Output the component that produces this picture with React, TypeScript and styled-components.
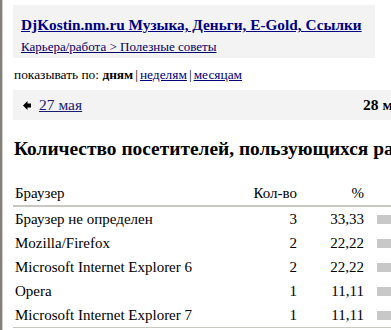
import React from "react";
import styled, { createGlobalStyle } from "styled-components";

const GlobalStyle = createGlobalStyle`
  html, body {
    margin: 0;
    padding: 0;
    background: #fff;
    overflow: hidden;
  }
  body {
    font-family: "Liberation Serif", "Times New Roman", serif;
    color: #000;
  }
`;

const Frame = styled.div`
  width: 820px;
  height: 330px;
  box-sizing: border-box;
  border-left: 2px solid #808080;
  box-shadow: inset 1px 0 0 #d4d0c8;
  padding: 5px 0 0 11px;
`;

const SiteBox = styled.div`
  width: 362px;
  height: 53px;
  box-sizing: border-box;
  background: #f3f3f3;
  padding: 10px 0 0 8px;
`;

const SiteTitle = styled.a`
  display: block;
  font-size: 15.3px;
  font-weight: bold;
  color: #000080;
  text-decoration: underline;
  line-height: 19px;
  white-space: nowrap;
`;

const Crumbs = styled.a`
  display: inline-block;
  margin-top: 5px;
  font-size: 13px;
  color: #000066;
  text-decoration: underline;
  line-height: 15px;
`;

const PeriodLine = styled.div`
  margin-top: 10px;
  padding-left: 1px;
  font-size: 13.4px;
  line-height: 14px;
  white-space: nowrap;
`;

const PeriodLink = styled.a<{ $active?: boolean }>`
  color: ${(p) => (p.$active ? "#000" : "#000080")};
  font-weight: ${(p) => (p.$active ? "bold" : "normal")};
  text-decoration: ${(p) => (p.$active ? "none" : "underline")};
`;

const Sep = styled.span`
  margin: 0 2px;
`;

const DateBar = styled.div`
  margin-top: 8px;
  width: 746px;
  height: 30px;
  background: #f3f3f3;
  display: grid;
  grid-template-columns: 1fr auto 1fr;
  align-items: center;
  padding: 0 10px;
  box-sizing: border-box;
`;

const PrevDay = styled.div`
  display: flex;
  align-items: center;
  gap: 8px;
`;

const DayLink = styled.a`
  font-size: 15.5px;
  color: #1a1a70;
  text-decoration: underline;
`;

const CurrentDay = styled.div`
  font-size: 15.5px;
  font-weight: bold;
`;

const Heading = styled.h2`
  margin: 18px 0 0 1px;
  font-size: 19.4px;
  font-weight: bold;
  line-height: 22px;
  white-space: nowrap;
`;

const Stats = styled.table`
  margin-top: 24px;
  border-collapse: collapse;
  table-layout: fixed;
  width: 520px;
  font-size: 15px;
  border-bottom: 1px solid #c8c8c0;
`;

const HeadCell = styled.th<{ $align?: string }>`
  font-weight: normal;
  text-align: ${(p) => p.$align || "left"};
  padding: 0 2px 3px;
  height: 18px;
  border-bottom: 2px solid #c8c8c0;
  white-space: nowrap;
`;

const Cell = styled.td<{ $align?: string }>`
  text-align: ${(p) => p.$align || "left"};
  padding: 0 2px;
  height: 24px;
  white-space: nowrap;
`;

const BarCell = styled.td`
  padding: 0 0 0 11px;
`;

const Bar = styled.div`
  height: 9px;
  background: #c8c8c8;
`;

const ArrowLeft = () => (
  <svg width="8" height="9" viewBox="0 0 8 9">
    <path d="M0 4.5 L4.5 0 L4.5 2.5 L8 2.5 L8 6.5 L4.5 6.5 L4.5 9 Z" fill="#000" />
  </svg>
);

const rows = [
  { name: "Браузер не определен", count: 3, pct: "33,33" },
  { name: "Mozilla/Firefox", count: 2, pct: "22,22" },
  { name: "Microsoft Internet Explorer 6", count: 2, pct: "22,22" },
  { name: "Opera", count: 1, pct: "11,11" },
  { name: "Microsoft Internet Explorer 7", count: 1, pct: "11,11" },
];

export default function App() {
  return (
    <>
      <GlobalStyle />
      <Frame>
        <SiteBox>
          <SiteTitle href="#">DjKostin.nm.ru Музыка, Деньги, E-Gold, Ссылки</SiteTitle>
          <Crumbs href="#">Карьера/работа &gt; Полезные советы</Crumbs>
        </SiteBox>

        <PeriodLine>
          показывать по: <PeriodLink $active>дням</PeriodLink>
          <Sep>|</Sep>
          <PeriodLink href="#">неделям</PeriodLink>
          <Sep>|</Sep>
          <PeriodLink href="#">месяцам</PeriodLink>
        </PeriodLine>

        <DateBar>
          <PrevDay>
            <ArrowLeft />
            <DayLink href="#">27 мая</DayLink>
          </PrevDay>
          <CurrentDay>28 мая</CurrentDay>
          <div />
        </DateBar>

        <Heading>Количество посетителей, пользующихся разными браузерами</Heading>

        <Stats>
          <colgroup>
            <col style={{ width: 226 }} />
            <col style={{ width: 60 }} />
            <col style={{ width: 67 }} />
            <col />
          </colgroup>
          <thead>
            <tr>
              <HeadCell>Браузер</HeadCell>
              <HeadCell $align="right">Кол-во</HeadCell>
              <HeadCell $align="right">%</HeadCell>
              <HeadCell />
            </tr>
          </thead>
          <tbody>
            {rows.map((r) => (
              <tr key={r.name}>
                <Cell>{r.name}</Cell>
                <Cell $align="right">{r.count}</Cell>
                <Cell $align="right">{r.pct}</Cell>
                <BarCell>
                  <Bar style={{ width: parseFloat(r.pct.replace(",", ".")) * 3 }} />
                </BarCell>
              </tr>
            ))}
          </tbody>
        </Stats>
      </Frame>
    </>
  );
}
